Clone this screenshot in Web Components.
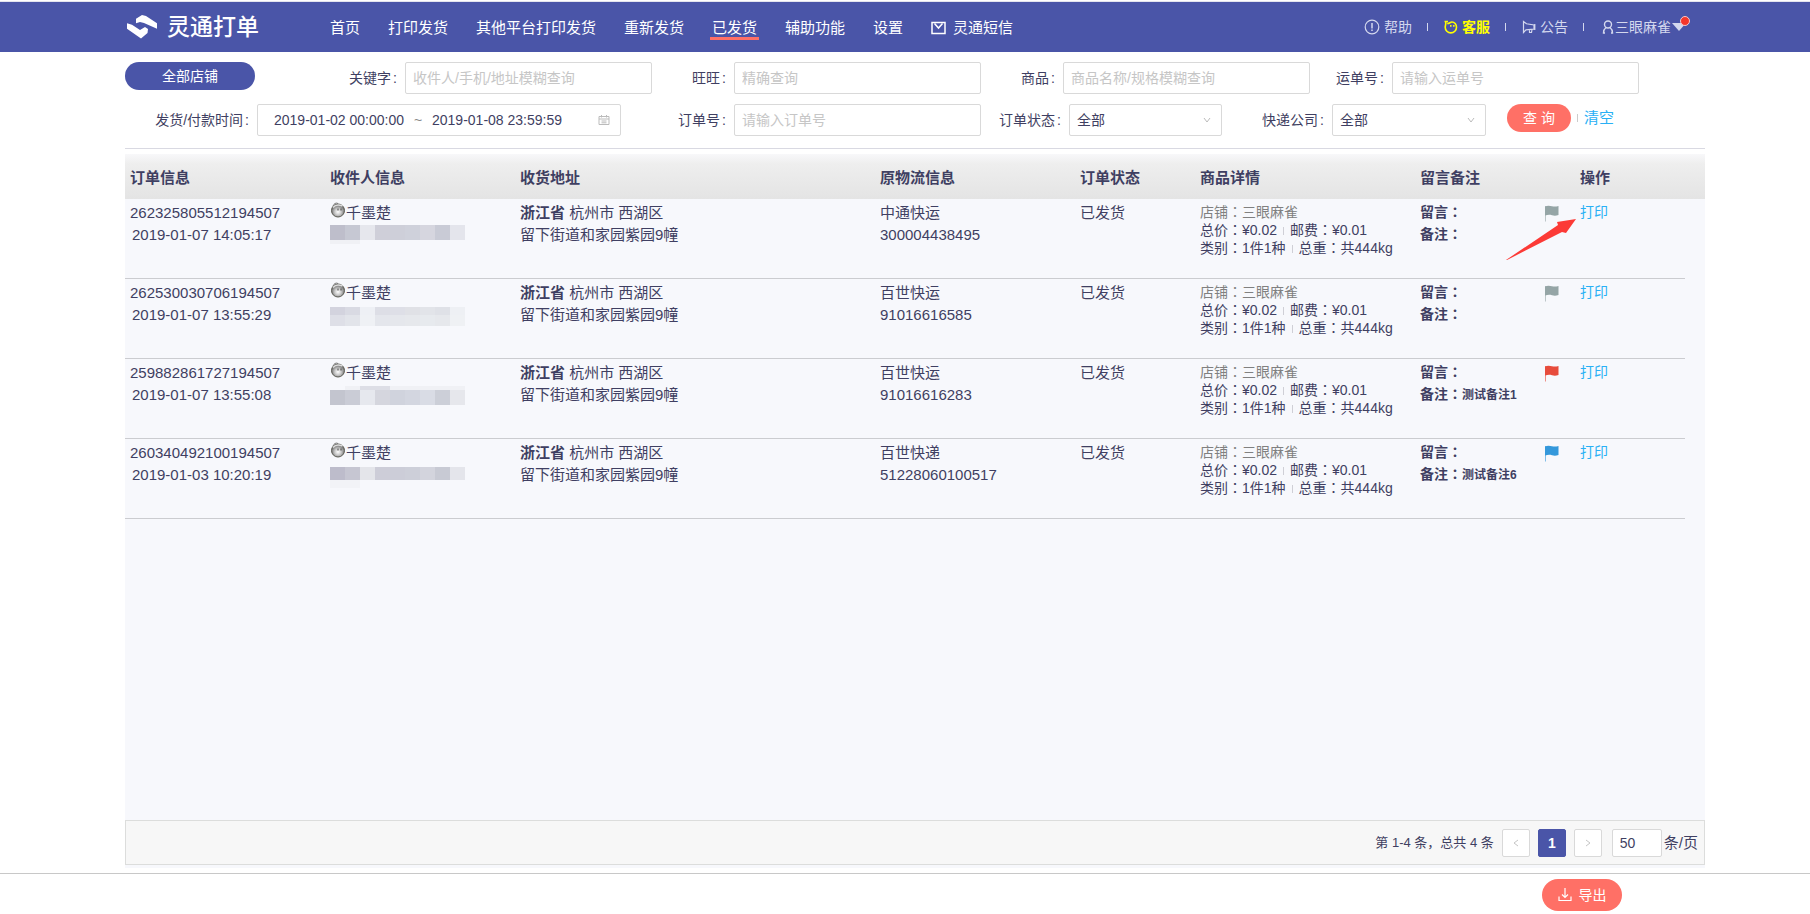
<!DOCTYPE html>
<html lang="zh-CN">
<head>
<meta charset="utf-8">
<title>灵通打单 - 已发货</title>
<style>
  html, body { margin: 0; }
  body {
    --brand: #4a55a8;
    --accent: #ff7066;
    --link: #29b0f5;
    --ink: #3f3f62;
    --line: #d9d9d9;
    --panel: #f7f8fc;
    --cjk: "Liberation Sans", "Noto Sans CJK SC", sans-serif;
    font-family: var(--cjk);
    font-size: 14px;
    line-height: 20px;
    color: var(--ink);
    background: #fff;
  }
</style>
</head>
<body>
<lt-app></lt-app>

<script>
const define = (name, html, setup) => {
  const template = document.createElement('template');
  customElements.define(name, class extends HTMLElement {
    connectedCallback() {
      if (this.shadowRoot) return;
      const root = this.attachShadow({ mode: 'open' });
      template.innerHTML = typeof html === 'function' ? html(this) : html;
      root.append(template.content.cloneNode(true));
      if (setup) setup(this, root);
    }
  });
};

/* ---------- icons ---------- */
const ICONS = {
  logo: ['0 0 30 24', '<path d="M9 8.300V3.700L15 0l4 1 11 7.300v5.400L17 8l-4-1z" fill="#fff"/><path d="M0 8.300l5 1.400L13 15l5-3 3 2-.5 4-6.500 5.500L0 13.700z" fill="#fff"/>'],
  mail: ['0 0 16 14', '<rect x="1" y="1.500" width="13" height="11" fill="none" stroke="currentColor" stroke-width="1.500"/><path d="M3.500 2.500 7.500 7l4-4.500" fill="none" stroke="currentColor" stroke-width="1.500"/>'],
  help: ['0 0 16 16', '<circle cx="8" cy="8" r="6.800" fill="none" stroke="currentColor" stroke-width="1.200"/><path d="M8 4v5.500M8 10.500v1.500" stroke="currentColor" stroke-width="1.500"/>'],
  service: ['0 0 14 14', '<path d="M.5 1.500h3.500M1.500 1.500C2.500 3.500 1.200 5 1.200 7.200a5.600 5.600 0 0 0 11.300 0C12.500 4.500 10.500 2 8 2 6 2 5.500 3.800 3.200 3.500" fill="none" stroke="currentColor" stroke-width="1.600"/><path d="M6.800 5v1.800M9.800 5v1.800" stroke="currentColor" stroke-width="1.500"/>'],
  notice: ['0 0 14 14', '<path d="M1.500 1.500V12.500L4 9.800 12 9V5L4.500 3.800zM7.500 9.500v3h2l.5-3M12.800 4v6" fill="none" stroke="currentColor" stroke-width="1.200"/>'],
  user: ['0 0 12 14', '<circle cx="6" cy="4.500" r="3.500" fill="none" stroke="currentColor" stroke-width="1.400"/><path d="M4 7.500C2 9 1.500 10.500 1.500 13H3M8 7.500c2 1.500 2.500 3 2.500 5.500H9" fill="none" stroke="currentColor" stroke-width="1.400"/>'],
  caret: ['0 0 14 9', '<path d="M0 0h14L7 8z" fill="currentColor"/>'],
  calendar: ['0 0 12 10', '<path d="M1 1.500h10v8H1zM1 4h10M3.500 0v2.500M8.500 0v2.500M3.500 6h5M3.500 7.800h5" fill="none" stroke="currentColor"/>'],
  down: ['0 0 8 8', '<path d="M1 2l3 4 3-4" fill="none" stroke="currentColor"/>'],
  left: ['0 0 8 8', '<path d="M6 1 2 4l4 3" fill="none" stroke="currentColor"/>'],
  right: ['0 0 8 8', '<path d="M2 1l4 3-4 3" fill="none" stroke="currentColor"/>'],
  flag: ['0 0 14 17', '<path d="M.500 1v15.500" stroke="currentColor" opacity=".6"/><path d="M0 1.500C2 .3 5 .6 7 1.200s4 .5 6.500-.2v9c-2.500.8-4.500.8-6.500.2S3 9.500 0 10.500z" fill="currentColor"/>'],
  face: ['0 0 16 16', '<defs><radialGradient id="g" cx=".5" cy=".6"><stop offset="0" stop-color="#fff"/><stop offset=".5" stop-color="#c9c9c9"/><stop offset="1" stop-color="#777"/></radialGradient></defs><circle cx="8" cy="8.500" r="6.500" fill="url(#g)" stroke="#5c5c54"/><path d="M3 5.500C5 3 9 2.500 12.500 4" fill="none" stroke="#ddd" stroke-width="1.500"/><path d="M3 4C4 1.500 6 .5 8 1.500" fill="none" stroke="#777"/><path d="M8 6.500v2M11 6.500v2" stroke="#444"/>'],
  download: ['0 0 14 14', '<path d="M7 0v9M4 6.500l3 3 3-3M1 8.500v4h12v-4" fill="none" stroke="currentColor" stroke-width="1.200"/>'],
};
define('lt-icon', el => {
  const [box, body] = ICONS[el.getAttribute('name')];
  const [, , w, h] = box.split(' ');
  return `<style>:host{display:inline-block;flex:none;width:${w}px;height:${h}px}svg{display:block}</style>
    <svg width="${w}" height="${h}" viewBox="${box}" aria-hidden="true">${body}</svg>`;
});

/* ---------- header ---------- */
define('lt-header', `
  <style>
    :host { display: block; border-top: 1px solid #e4e4ee; margin-top: 1px; background: var(--brand); }
    header { display: flex; align-items: center; height: 50px; padding: 0 124px 0 127px; color: #fff; }
    .brand { display: flex; align-items: center; gap: 10px; width: 203px; color: #fff; text-decoration: none;
             font-size: 23px; line-height: 28px; font-weight: 500; }
    nav { display: flex; gap: 24px; font-size: 15px; flex: 1; margin-top: 5px; }
    nav a { color: #fff; text-decoration: none; line-height: 18px; padding: 0 2px; border-bottom: 3px solid transparent; white-space: nowrap; }
    nav a:first-child { padding-left: 0; }
    nav a.on { border-color: var(--accent); }
    nav a lt-icon { margin-right: 6px; vertical-align: -2px; }
    .tools { display: flex; align-items: center; color: #d4d8ee; }
    .tools a { display: flex; align-items: center; gap: 4px; color: inherit; text-decoration: none; white-space: nowrap; }
    .tools i { width: 1px; height: 8px; background: #d4d8ee; margin: 0 16px 0 15px; }
    .tools a.hot { color: #ff0; font-weight: bold; }
    .tools a.me { gap: 1px; position: relative; margin-left: 2px; }
    .me b { position: absolute; right: -4px; top: -1px; width: 8px; height: 8px; border-radius: 50%;
            background: #f5362b; border: 1px solid #f6c9cb; }
  </style>
  <header>
    <a class="brand" href="#"><lt-icon name="logo"></lt-icon>灵通打单</a>
    <nav>
      <a href="#">首页</a><a href="#">打印发货</a><a href="#">其他平台打印发货</a><a href="#">重新发货</a>
      <a href="#" class="on">已发货</a><a href="#">辅助功能</a><a href="#">设置</a>
      <a href="#"><lt-icon name="mail"></lt-icon>灵通短信</a>
    </nav>
    <div class="tools">
      <a href="#"><lt-icon name="help"></lt-icon>帮助</a><i></i>
      <a href="#" class="hot"><lt-icon name="service"></lt-icon>客服</a><i></i>
      <a href="#"><lt-icon name="notice"></lt-icon>公告</a><i></i>
      <a href="#" class="me"><lt-icon name="user"></lt-icon>三眼麻雀<lt-icon name="caret"></lt-icon><b></b></a>
    </div>
  </header>`);

/* ---------- filter fields ---------- */
const control = el => {
  const type = el.getAttribute('type');
  if (type === 'select') return `<div class="box"><select id="c"><option>全部</option></select><lt-icon name="down"></lt-icon></div>`;
  if (type === 'range') return `<div class="box range">
    <input id="c" value="2019-01-02 00:00:00"><span>~</span><input aria-label="结束时间" value="2019-01-08 23:59:59">
    <lt-icon name="calendar"></lt-icon></div>`;
  return `<div class="box"><input id="c" placeholder="${el.getAttribute('hint')}"></div>`;
};
define('lt-field', el => `
  <style>
    :host { display: grid; grid-template-columns: var(--label, 82px) 1fr; align-items: center; }
    label { text-align: right; white-space: nowrap; }
    label::after { content: ":"; margin: 0 8px 0 2px; }
    .box { display: flex; align-items: center; box-sizing: border-box; height: 32px; border: 1px solid var(--line);
           border-radius: 2px; background: #fff; min-width: 0; position: relative; }
    input, select { font: inherit; color: inherit; border: 0; background: none; outline: 0; margin: 0;
                    padding: 0 7px; flex: 1; min-width: 0; height: 30px; appearance: none; }
    input::placeholder { color: #c6c6c6; opacity: 1; }
    select + lt-icon { position: absolute; right: 10px; color: #bbb; pointer-events: none; }
    .range { padding-left: 16px; padding-right: 10px; }
    .range input { flex: none; width: 132px; padding: 0; }
    .range span { width: 14px; margin-left: 8px; margin-right: 4px; color: #888; }
    .range lt-icon { margin-left: auto; color: #bbb; }
  </style>
  <label for="c">${el.getAttribute('label')}</label>${control(el)}`);

define('lt-filters', `
  <style>
    :host { display: block; padding: 10px 0 12px; border-bottom: 1px solid #d9d9e2; }
    .row { display: grid; }
    .r1 { grid-template-columns: 198fr repeat(4, 329fr) 66fr; margin-bottom: 10px; }
    .r2 { grid-template-columns: 496fr 360fr 241fr 264fr 219fr; }
    button { font: inherit; color: #fff; border: 0; height: 28px; padding: 0; border-radius: 14px; }
    .shops { width: 130px; background: var(--brand); }
    .act { display: flex; align-items: center; height: 28px; padding-left: 21px; font-size: 15px; }
    .go { width: 64px; background: var(--accent); font-size: 14px; }
    .act i { width: 1px; height: 8px; background: #ccc; margin: 0 6px; }
    .act a { color: var(--link); text-decoration: none; }
  </style>
  <div class="row r1">
    <button class="shops" type="button">全部店铺</button>
    <lt-field label="关键字" hint="收件人/手机/地址模糊查询"></lt-field>
    <lt-field label="旺旺" hint="精确查询"></lt-field>
    <lt-field label="商品" hint="商品名称/规格模糊查询"></lt-field>
    <lt-field label="运单号" hint="请输入运单号"></lt-field>
  </div>
  <div class="row r2">
    <lt-field style="--label:132px" label="发货/付款时间" type="range"></lt-field>
    <lt-field style="--label:113px" label="订单号" hint="请输入订单号"></lt-field>
    <lt-field style="--label:88px" label="订单状态" type="select"></lt-field>
    <lt-field style="--label:110px" label="快递公司" type="select"></lt-field>
    <div class="act"><button class="go" type="button">查 询</button><i></i><a href="#">清空</a></div>
  </div>`);

/* Masked phone number: nine 15px blocks, with paler strips above or below */
const MASKS = {
  a: ['#bebecb #c6c8d3 #e6e7ed #cfcfd9 #cecfd9 #cfd1db #d6d6df #c9cbd6 #e4e5ec', 1, 15, '<rect y="16" width="30" height="4" fill="#f0f1f5"/>'],
  b: ['#d3d3de #d9dae3 #eef0f5 #dddee6 #dedfe7 #e0e1e6 #e2e4e9 #dfe1e7 #eef0f4', 3, 19, '<rect y="11" width="135" height="11" fill="#f0f2f6" opacity=".4"/>'],
  c: ['#c3c5cf #caccd6 #e6e8ee #d5d6de #d0d3dd #d3d6e0 #d9dce5 #cccfd8 #e6e7ec', 6, 15, '<rect x="15" y="2" width="120" height="4" fill="#f0f1f5"/><rect x="30" y="2" width="30" height="4" fill="#dddee6"/>'],
  d: ['#bdbccb #c6c6d2 #e4e5ea #cdcdd8 #cccdd8 #cdcfd9 #d3d4dd #c8cad4 #e4e5eb', 3, 13, '<rect y="16" width="30" height="8" fill="#f2f3f7"/>'],
};
define('lt-mask', el => {
  const [colors, top, tall, extra] = MASKS[el.getAttribute('tone')];
  return `<style>:host{display:block}svg{display:block}</style>
  <svg width="135" height="26" aria-hidden="true">${colors.split(' ').map((c, i) =>
    `<rect x="${i * 15}" y="${top}" width="15" height="${tall}" fill="${c}"/>`).join('')}${extra}</svg>`;
});

/* ---------- orders table ---------- */
const C = '<span class="colon" lang="zh-TW">：</span>';
const ORDERS = [
  ['262325805512194507', '2019-01-07 14:05:17', '中通快运', '300004438495', '', '#95a5a6', 'a'],
  ['262530030706194507', '2019-01-07 13:55:29', '百世快运', '91016616585', '', '#95a5a6', 'b'],
  ['259882861727194507', '2019-01-07 13:55:08', '百世快运', '91016616283', '测试备注1', '#e74c3c', 'c'],
  ['260340492100194507', '2019-01-03 10:20:19', '百世快递', '51228060100517', '测试备注6', '#3498db', 'd'],
];
const orderRow = ([id, time, ship, no, note, flag, tone], i) => `
  <tr>
    <td>${id}<div class="time">${time}</div></td>
    <td><div class="who"><lt-icon name="face"></lt-icon>千墨楚</div><lt-mask tone="${tone}"></lt-mask></td>
    <td><b>浙江省</b> 杭州市 西湖区<br>留下街道和家园紫园9幢</td>
    <td>${ship}<br>${no}</td>
    <td>已发货</td>
    <td class="goods"><div class="shop">店铺${C}三眼麻雀</div>
      <div>总价${C}¥0.02<i></i>邮费${C}¥0.01</div><div>类别${C}1件1种<i></i>总重${C}共444kg</div></td>
    <td class="memo"><lt-icon name="flag" style="color:${flag}"></lt-icon><div>留言${C}</div><div>备注${C}<small>${note}</small></div></td>
    <td class="op"><a href="#">打印</a>${i ? '' : `<svg class="arrow" width="70" height="42" viewBox="0 0 70 42" aria-hidden="true">
      <path d="M0 41 52 6 51 3 70 0 60 14 56 13 1 41z" fill="#fc3a36"/></svg>`}</td>
    <td class="gutter"></td>
  </tr>`;
define('lt-orders', `
  <style>
    :host { display: block; margin-top: 5px; background: var(--panel); flex: 1; }
    table { width: 100%; table-layout: fixed; border-spacing: 0; font-size: 15px; line-height: 22px; }
    th { text-align: left; font-weight: bold; padding: 3px 5px 0; height: 42px; }
    thead { background: linear-gradient(#f8f8fa, #eeeeee 10px, #e4e4e4); }
    td { vertical-align: top; height: 76px; padding: 3px 5px 0; border-bottom: 1px solid #cbccd0; white-space: nowrap; }
    .gutter { border: 0; padding: 0; }
    .time { padding-left: 2px; }
    .who { display: flex; height: 22px; }
    .goods { font-size: 14px; line-height: 18px; padding-top: 4px; height: 75px; }
    .goods .shop { color: #808080; }
    .goods i { display: inline-block; width: 1px; height: 8px; background: #cfcfd6; margin: 0 6px; }
    .memo { font-size: 14px; font-weight: bold; padding-top: 2px; height: 77px; }
    .memo lt-icon { float: right; margin: 4px 11px 0 0; }
    .memo small { font-size: 12px; line-height: 1; }
    .op { font-size: 14px; position: relative; padding-top: 2px; height: 77px; }
    .op a { color: var(--link); text-decoration: none; }
    .arrow { position: absolute; left: -69px; top: 20px; }
    .colon { font-family: "Noto Sans CJK TC", sans-serif; line-height: 0; }
  </style>
  <table>
    <colgroup>
      <col style="width:200px"><col style="width:190px"><col><col style="width:200px"><col style="width:120px">
      <col style="width:220px"><col style="width:160px"><col style="width:110px"><col style="width:20px">
    </colgroup>
    <thead><tr><th>订单信息</th><th>收件人信息</th><th>收货地址</th><th>原物流信息</th><th>订单状态</th>
      <th>商品详情</th><th>留言备注</th><th>操作</th><th class="gutter"></th></tr></thead>
    <tbody>${ORDERS.map(orderRow).join('')}</tbody>
  </table>`);

/* ---------- pagination ---------- */
define('lt-pager', `
  <style>
    :host { display: block; background: var(--panel); padding-bottom: 3px; }
    nav { display: flex; align-items: center; justify-content: flex-end; box-sizing: border-box; height: 45px;
          padding-right: 6px; border: 1px solid #dcdddc; background: #f7f7f7; }
    .sum { font-size: 13px; margin-right: 8px; }
    button { box-sizing: border-box; width: 28px; height: 28px; margin: 1px 8px 0 0; padding: 0; border: 1px solid var(--line);
             border-radius: 2px; background: #fff; color: #c6c6c6; font: inherit;
             display: flex; align-items: center; justify-content: center; }
    button.on { background: var(--brand); border-color: var(--brand); color: #fff; font-weight: bold; }
    label { display: flex; align-items: center; gap: 2px; margin-left: 2px; font-size: 15px; }
    input { box-sizing: border-box; width: 50px; height: 28px; border: 1px solid var(--line); border-radius: 2px;
            padding: 0 7px; font: inherit; font-size: 14px; color: inherit; background: #fff; }
  </style>
  <nav aria-label="分页">
    <span class="sum">第 1-4 条，总共 4 条</span>
    <button type="button" aria-label="上一页"><lt-icon name="left"></lt-icon></button>
    <button type="button" class="on">1</button>
    <button type="button" aria-label="下一页"><lt-icon name="right"></lt-icon></button>
    <label><input value="50">条/页</label>
  </nav>`);

define('lt-footer', `
  <style>
    :host { display: flex; justify-content: flex-end; margin-top: 5px; padding: 5px 188px 3px 0; border-top: 1px solid #c8c8c8; background: #fff; }
    button { display: flex; align-items: center; justify-content: center; gap: 7px; width: 80px; height: 32px;
             padding: 0; border: 0; border-radius: 16px; background: var(--accent); color: #fff; font: inherit; }
  </style>
  <button type="button"><lt-icon name="download"></lt-icon>导出</button>`);

define('lt-app', `
  <style>
    :host { display: flex; flex-direction: column; min-height: 100vh; }
    main { flex: 1; display: flex; flex-direction: column; padding: 0 105px 0 125px; }
  </style>
  <lt-header></lt-header>
  <main><lt-filters></lt-filters><lt-orders></lt-orders><lt-pager></lt-pager></main>
  <lt-footer></lt-footer>`);
</script>
</body>
</html>
